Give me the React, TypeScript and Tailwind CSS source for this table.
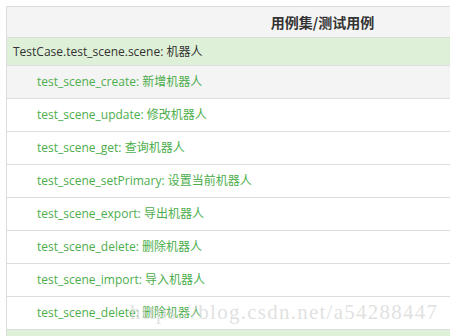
const CASES = [
  { name: "test_scene_create", label: "新增机器人" },
  { name: "test_scene_update", label: "修改机器人" },
  { name: "test_scene_get", label: "查询机器人" },
  { name: "test_scene_setPrimary", label: "设置当前机器人" },
  { name: "test_scene_export", label: "导出机器人" },
  { name: "test_scene_delete", label: "删除机器人" },
  { name: "test_scene_import", label: "导入机器人" },
  { name: "test_scene_delete", label: "删除机器人" },
];

export default function App() {
  return (
    <div className="relative h-[336px] w-[450px] overflow-hidden bg-white pl-[6px] pt-[6px] font-['Open_Sans','Noto_Sans_CJK_SC',sans-serif]">
      <table className="w-[633px] border-collapse text-[12px]">
        <thead>
          <tr className="h-[31px] bg-[#f4f4f4]">
            <th className="border border-[#ddd] text-center font-['Noto_Sans_CJK_SC',sans-serif] text-[14px] font-bold text-[#333]">
              用例集/测试用例
            </th>
          </tr>
        </thead>
        <tbody>
          <tr className="h-[28px] bg-[#dff0d8]">
            <td className="border border-[#ddd] pl-[6px] text-[#333]">
              TestCase.test_scene.scene: 机器人
            </td>
          </tr>
          {CASES.map((c, i) => (
            <tr key={i} className={i === 0 ? "h-[33px] bg-[#f4f4f4]" : "h-[33px] bg-white"}>
              <td className="border border-[#ddd] pl-[30px] text-[#4cae4c]">
                {c.name}: {c.label}
              </td>
            </tr>
          ))}
          <tr className="h-[28px] bg-[#dff0d8]">
            <td className="border border-[#ddd]"></td>
          </tr>
        </tbody>
      </table>
      {/* csdn watermark */}
      <div className="pointer-events-none absolute left-[130px] top-[302px] font-['Liberation_Serif',serif] text-[21px] leading-none tracking-[1.25px] text-[#d9d9d9]/80">
        https://blog.csdn.net/a54288447
      </div>
    </div>
  );
}
